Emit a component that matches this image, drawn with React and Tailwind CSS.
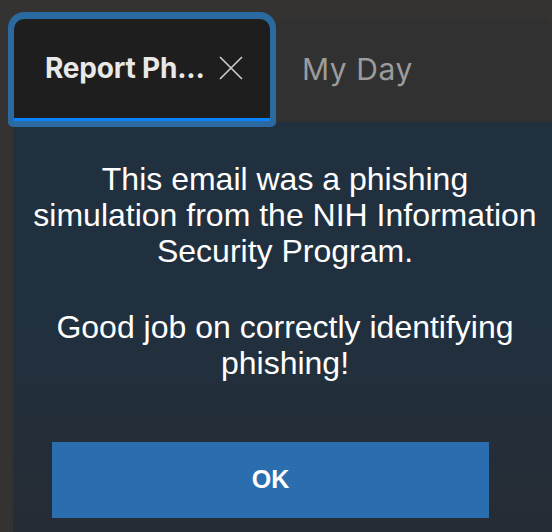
export default function App() {
  return (
    <div className="w-[552px] h-[532px] bg-[#353232] overflow-hidden flex flex-col">
      {/* tab strip */}
      <div className="h-[122px] flex items-start pl-[8px] pt-[12px] shrink-0">
        <div className="relative z-10 w-[268px] h-[115px] rounded-t-[16px] rounded-b-[5px] bg-[#2a6aa0] pt-[7px] px-[6px] pb-[6px] shrink-0">
          <div className="h-full rounded-t-[10px] bg-[#1e1e1e] border-b-[3px] border-[#0a84ff] flex items-center pl-[31px] pb-[2px] font-['Inter',sans-serif]">
            <span className="text-[28px] font-bold text-[#e8e8e8] tracking-[-0.2px]">Report Ph...</span>
            <svg className="ml-[14px]" width="24" height="24" viewBox="0 0 24 24" fill="none" stroke="#cfcfcf" strokeWidth="1.6">
              <path d="M1 1L23 23M23 1L1 23" />
            </svg>
          </div>
        </div>
        <div className="mt-[6px] h-[104px] flex-1 bg-[#313131] rounded-tr-[12px] flex items-center pl-[26px] pb-[2px] font-['Inter',sans-serif]">
          <span className="text-[30px] tracking-[0.6px] text-[#9c9c9c]">My Day</span>
        </div>
      </div>
      {/* content */}
      <div className="ml-[13px] flex-1 bg-gradient-to-b from-[#21303f] via-[#21303f] to-[#262c33] pt-[39px] font-['Liberation_Sans',Arial,sans-serif] text-white">
        <div className="pl-[5px] text-center text-[32px] leading-[36px]">
          <p>This email was a phishing<br />simulation from the NIH Information<br />Security Program.</p>
          <p className="mt-[40px]">Good job on correctly identifying<br />phishing!</p>
        </div>
        <button className="mt-[61px] ml-[39px] w-[437px] h-[76px] bg-[#2b6eaf] text-white text-[25px] font-bold flex items-center justify-center">
          OK
        </button>
      </div>
    </div>
  )
}
